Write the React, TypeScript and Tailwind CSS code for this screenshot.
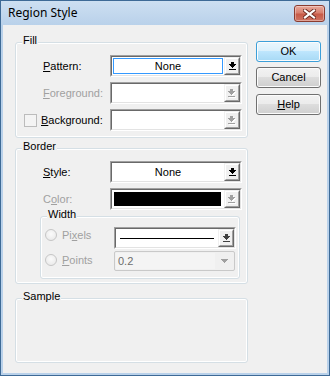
import React from "react";

const FONT = { fontFamily: '"Liberation Sans", Arial, sans-serif' };

function Arrow({ color = "#000" }: { color?: string }) {
  return (
    <svg width="7" height="8" viewBox="0 0 7 8" shapeRendering="crispEdges" className="block">
      <rect x="2" y="0" width="3" height="2" fill={color} />
      <rect x="0" y="2" width="7" height="1" fill={color} />
      <rect x="1" y="3" width="5" height="1" fill={color} />
      <rect x="2" y="4" width="3" height="1" fill={color} />
      <rect x="3" y="5" width="1" height="1" fill={color} />
      <rect x="0" y="7" width="7" height="1" fill={color} />
    </svg>
  );
}

function DropBtn({ disabled, color }: { disabled?: boolean; color?: string }) {
  return (
    <div className="w-[16px] h-full border border-t-[#f0f0f0] border-l-[#f0f0f0] border-b-[#696969] border-r-[#696969] bg-[#f0f0f0]">
      <div className="w-full h-full border border-t-white border-l-white border-b-[#a0a0a0] border-r-[#a0a0a0] flex items-center justify-center">
        {disabled ? (
          <div className="relative w-[8px] h-[9px]">
            <div className="absolute left-[1px] top-[1px]">
              <Arrow color="#ffffff" />
            </div>
            <div className="absolute left-0 top-0">
              <Arrow color="#a0a0a0" />
            </div>
          </div>
        ) : (
          <Arrow color={color ?? "#000"} />
        )}
      </div>
    </div>
  );
}

function Combo({
  w,
  children,
  disabled,
  arrowColor,
}: {
  w: string;
  children?: React.ReactNode;
  disabled?: boolean;
  arrowColor?: string;
}) {
  return (
    <div
      className={`${w} h-[22px] border border-t-[#a0a0a0] border-l-[#a0a0a0] border-b-white border-r-white`}
    >
      <div className="w-full h-full border border-t-[#696969] border-l-[#696969] border-b-[#e3e3e3] border-r-[#e3e3e3] bg-white flex">
        <div className="flex-1 min-w-0 h-full">{children}</div>
        <DropBtn disabled={disabled} color={arrowColor} />
      </div>
    </div>
  );
}

function Group({
  label,
  className,
  children,
}: {
  label: string;
  className?: string;
  children?: React.ReactNode;
}) {
  return (
    <div
      className={`relative border border-[#d5dfe5] rounded-[3px] shadow-[inset_0_0_0_1px_#ffffff] ${className ?? ""}`}
    >
      <span className="absolute left-[6px] top-[-9px] px-[1px] bg-[#f0f0f0] leading-[13px] text-black">
        {label}
      </span>
      {children}
    </div>
  );
}

function Btn({
  children,
  def,
  className,
}: {
  children: React.ReactNode;
  def?: boolean;
  className?: string;
}) {
  return (
    <div
      className={`w-[65px] h-[21px] rounded-[3px] border flex items-center justify-center text-black shadow-[inset_0_0_0_1px_#fcfcfc] ${
        def
          ? "border-[#3c9fd9] bg-[linear-gradient(#eaf6fd,#d9f0fc_50%,#bee6fd_50%,#a7d9f5)]"
          : "border-[#707070] bg-[linear-gradient(#f2f2f2,#ebebeb_50%,#dddddd_50%,#cfcfcf)]"
      } ${className ?? ""}`}
    >
      {children}
    </div>
  );
}

function Radio() {
  return (
    <div className="w-[12px] h-[12px] rounded-full border border-[#c6c6c6] bg-[radial-gradient(circle_at_50%_40%,#fbfbfb,#e6e6e6)] shrink-0" />
  );
}

export default function App() {
  return (
    <div
      className="w-[330px] h-[376px] flex flex-col bg-[#b9d1ea] border border-[#3e6a96] text-[11px] leading-[13px]"
      style={FONT}
    >
      {/* Title bar */}
      <div className="h-[24px] flex items-start justify-between pl-[7px] pr-[4px] bg-[linear-gradient(#cddff1,#b9d1ea)]">
        <span
          className="mt-[5px] text-[12px] leading-[14px] text-black"
          style={{ fontFamily: '"Noto Sans", "Open Sans", sans-serif' }}
        >
          Region Style
        </span>
        <div className="mt-[4px] w-[31px] h-[17px] rounded-[3px] border border-[#8a3b2f] bg-[linear-gradient(#e9a99b,#d8806f_45%,#c75a47_55%,#cf7463)] shadow-[inset_0_0_0_1px_rgba(255,255,255,0.35)] flex items-center justify-center">
          <svg width="13" height="10" viewBox="0 0 13 10">
            <path d="M2 1.5 L11 8.5 M11 1.5 L2 8.5" stroke="#6b2a20" strokeWidth="4" strokeLinecap="square" />
            <path d="M2 1.5 L11 8.5 M11 1.5 L2 8.5" stroke="#ffffff" strokeWidth="2.2" strokeLinecap="square" />
          </svg>
        </div>
      </div>

      {/* Client area */}
      <div className="flex-1 mx-[2px] mb-[2px] bg-[#f0f0f0] flex">
        {/* Left column */}
        <div className="pl-[12px] pt-[17px] w-[245px] shrink-0">
          <Group label="Fill" className="w-[233px] pt-[12px] pb-[6px]">
            <div className="flex items-center h-[22px] pl-[27px]">
              <span className="w-[67px]">
                <u>P</u>attern:
              </span>
              <Combo w="w-[132px]">
                <div className="h-full p-[1px]">
                  <div className="h-full border border-[#3399ff] flex items-center justify-center text-black">
                    None
                  </div>
                </div>
              </Combo>
            </div>
            <div className="flex items-center h-[22px] pl-[27px] mt-[5px]">
              <span className="w-[67px] text-[#a0a0a0]">
                <u>F</u>oreground:
              </span>
              <Combo w="w-[132px]" disabled />
            </div>
            <div className="flex items-center h-[22px] pl-[8px] mt-[5px]">
              <div className="w-[13px] h-[13px] border border-[#bcbcbc] bg-[#f4f4f4] shrink-0" />
              <span className="ml-[4px] w-[69px]">
                <u>B</u>ackground:
              </span>
              <Combo w="w-[132px]" disabled />
            </div>
          </Group>

          <Group label="Border" className="w-[233px] mt-[10px] pt-[12px] pb-[4px]">
            <div className="flex items-center h-[22px] pl-[27px]">
              <span className="w-[67px]">
                <u>S</u>tyle:
              </span>
              <Combo w="w-[132px]">
                <div className="h-full flex items-center justify-center">None</div>
              </Combo>
            </div>
            <div className="flex items-center h-[22px] pl-[27px] mt-[5px]">
              <span className="w-[67px] text-[#a0a0a0]">
                C<u>o</u>lor:
              </span>
              <Combo w="w-[132px]" disabled>
                <div className="h-full pl-[2px] pr-[3px] py-[2px]">
                  <div className="h-full bg-black" />
                </div>
              </Combo>
            </div>

            <Group label="Width" className="ml-[24px] mt-[6px] w-[200px] pt-[10px] pb-[7px]">
              <div className="flex items-start h-[22px] pl-[4px]">
                <div className="w-[69px] h-[14px] mt-[1px] flex items-center">
                  <Radio />
                  <span className="ml-[5px] text-[#a0a0a0]">
                    Pi<u>x</u>els
                  </span>
                </div>
                <Combo w="w-[122px]" arrowColor="#404040">
                  <div className="h-full flex items-center pl-[4px] pr-[4px]">
                    <div className="w-full h-[1px] bg-black" />
                  </div>
                </Combo>
              </div>
              <div className="flex items-start h-[20px] pl-[4px] mt-[2px]">
                <div className="w-[69px] h-[14px] mt-[2px] flex items-center">
                  <Radio />
                  <span className="ml-[5px] text-[#a0a0a0]">
                    <u>P</u>oints
                  </span>
                </div>
                <div className="w-[121px] h-[20px] border border-[#c9c9c9] rounded-[2px] bg-[#f0f0f0] flex p-[1px]">
                  <div className="w-[99px] h-full bg-[#f4f4f4] flex items-center pl-[2px] text-[#6d6d6d]">
                    0.2
                  </div>
                  <div className="flex-1 flex items-center justify-center">
                    <svg width="7" height="4" viewBox="0 0 7 4" shapeRendering="crispEdges">
                      <path d="M0 0 H7 L3.5 4 Z" fill="#a0a0a0" />
                    </svg>
                  </div>
                </div>
              </div>
            </Group>
          </Group>

          <Group label="Sample" className="w-[233px] mt-[14px] h-[65px]" />
        </div>

        {/* Buttons */}
        <div className="pt-[16px] ml-[8px] flex flex-col">
          <Btn def>OK</Btn>
          <Btn className="mt-[5px]">Cancel</Btn>
          <Btn className="mt-[6px]">
            <span>
              <u>H</u>elp
            </span>
          </Btn>
        </div>
      </div>
    </div>
  );
}
